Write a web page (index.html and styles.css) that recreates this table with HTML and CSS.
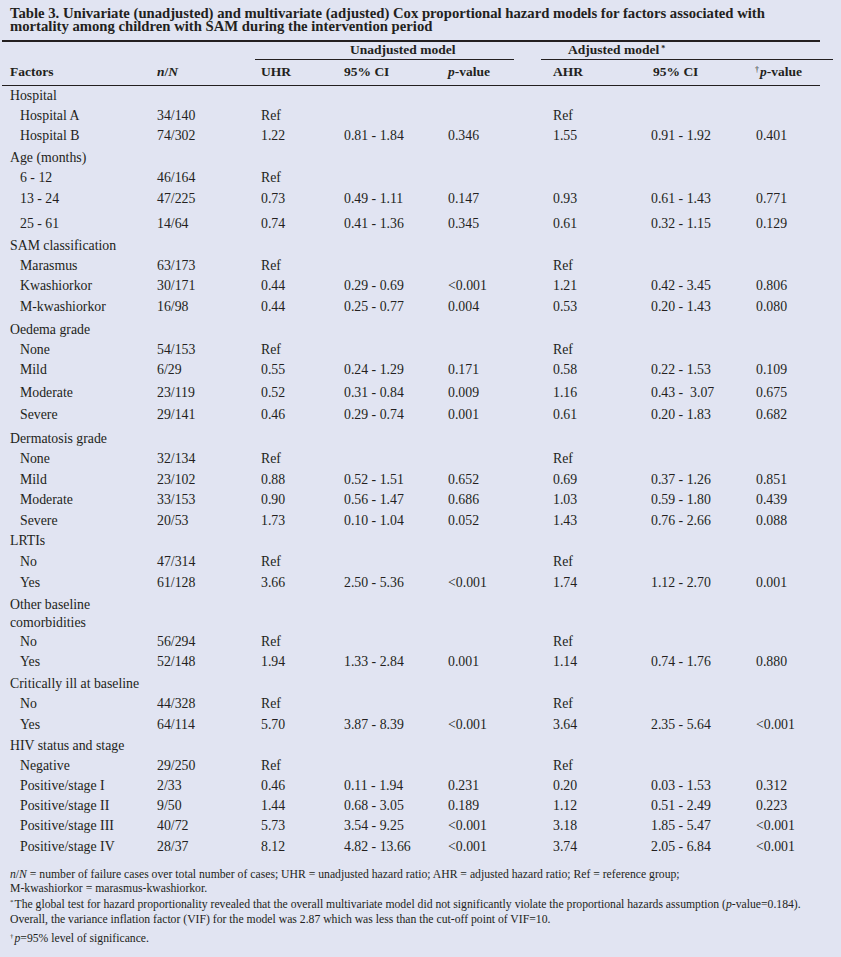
FILE: index.html
```html
<!DOCTYPE html>
<html>
<head>
<meta charset="utf-8">
<link rel="stylesheet" href="styles.css">
</head>
<body>
<div class="page">
  <h1 class="title">Table 3. Univariate (unadjusted) and multivariate (adjusted) Cox proportional hazard models for factors associated with<br>mortality among children with SAM during the intervention period</h1>
  <table class="tbl">
    <colgroup>
      <col class="c1"><col class="c2"><col class="c3"><col class="c4"><col class="c5"><col class="c6"><col class="c7"><col class="c8">
    </colgroup>
    <thead>
      <tr class="hrow1">
        <th></th><th></th>
        <th colspan="3"><div class="span-u">Unadjusted model</div></th>
        <th colspan="3"><div class="span-a">Adjusted model<sup>*</sup></div></th>
      </tr>
      <tr class="hrow2">
        <th class="lbl">Factors</th>
        <th><i>n</i>/<i>N</i></th>
        <th>UHR</th>
        <th>95% CI</th>
        <th><i>p</i>-value</th>
        <th>AHR</th>
        <th class="ci2">95% CI</th>
        <th class="pv2"><sup class="dag">†</sup><i>p</i>-value</th>
      </tr>
    </thead>
    <tbody>
      <tr class="first"><td class="grp">Hospital</td><td></td><td></td><td></td><td></td><td></td><td></td><td></td></tr>
      <tr><td class="sub">Hospital A</td><td>34/140</td><td>Ref</td><td></td><td></td><td>Ref</td><td></td><td></td></tr>
      <tr><td class="sub">Hospital B</td><td>74/302</td><td>1.22</td><td>0.81 - 1.84</td><td>0.346</td><td>1.55</td><td>0.91 - 1.92</td><td>0.401</td></tr>
      <tr class="p2"><td class="grp">Age (months)</td><td></td><td></td><td></td><td></td><td></td><td></td><td></td></tr>
      <tr><td class="sub">6 - 12</td><td>46/164</td><td>Ref</td><td></td><td></td><td></td><td></td><td></td></tr>
      <tr class="p1"><td class="sub">13 - 24</td><td>47/225</td><td>0.73</td><td>0.49 - 1.11</td><td>0.147</td><td>0.93</td><td>0.61 - 1.43</td><td>0.771</td></tr>
      <tr class="p5"><td class="sub">25 - 61</td><td>14/64</td><td>0.74</td><td>0.41 - 1.36</td><td>0.345</td><td>0.61</td><td>0.32 - 1.15</td><td>0.129</td></tr>
      <tr class="p2"><td class="grp">SAM classification</td><td></td><td></td><td></td><td></td><td></td><td></td><td></td></tr>
      <tr><td class="sub">Marasmus</td><td>63/173</td><td>Ref</td><td></td><td></td><td>Ref</td><td></td><td></td></tr>
      <tr><td class="sub">Kwashiorkor</td><td>30/171</td><td>0.44</td><td>0.29 - 0.69</td><td>&lt;0.001</td><td>1.21</td><td>0.42 - 3.45</td><td>0.806</td></tr>
      <tr class="p1"><td class="sub">M-kwashiorkor</td><td>16/98</td><td>0.44</td><td>0.25 - 0.77</td><td>0.004</td><td>0.53</td><td>0.20 - 1.43</td><td>0.080</td></tr>
      <tr class="p3"><td class="grp">Oedema grade</td><td></td><td></td><td></td><td></td><td></td><td></td><td></td></tr>
      <tr><td class="sub">None</td><td>54/153</td><td>Ref</td><td></td><td></td><td>Ref</td><td></td><td></td></tr>
      <tr><td class="sub">Mild</td><td>6/29</td><td>0.55</td><td>0.24 - 1.29</td><td>0.171</td><td>0.58</td><td>0.22 - 1.53</td><td>0.109</td></tr>
      <tr class="p3"><td class="sub">Moderate</td><td>23/119</td><td>0.52</td><td>0.31 - 0.84</td><td>0.009</td><td>1.16</td><td>0.43 -&nbsp; 3.07</td><td>0.675</td></tr>
      <tr class="p2"><td class="sub">Severe</td><td>29/141</td><td>0.46</td><td>0.29 - 0.74</td><td>0.001</td><td>0.61</td><td>0.20 - 1.83</td><td>0.682</td></tr>
      <tr class="p4"><td class="grp">Dermatosis grade</td><td></td><td></td><td></td><td></td><td></td><td></td><td></td></tr>
      <tr><td class="sub">None</td><td>32/134</td><td>Ref</td><td></td><td></td><td>Ref</td><td></td><td></td></tr>
      <tr class="p1"><td class="sub">Mild</td><td>23/102</td><td>0.88</td><td>0.52 - 1.51</td><td>0.652</td><td>0.69</td><td>0.37 - 1.26</td><td>0.851</td></tr>
      <tr><td class="sub">Moderate</td><td>33/153</td><td>0.90</td><td>0.56 - 1.47</td><td>0.686</td><td>1.03</td><td>0.59 - 1.80</td><td>0.439</td></tr>
      <tr class="p1"><td class="sub">Severe</td><td>20/53</td><td>1.73</td><td>0.10 - 1.04</td><td>0.052</td><td>1.43</td><td>0.76 - 2.66</td><td>0.088</td></tr>
      <tr><td class="grp">LRTIs</td><td></td><td></td><td></td><td></td><td></td><td></td><td></td></tr>
      <tr class="p1"><td class="sub">No</td><td>47/314</td><td>Ref</td><td></td><td></td><td>Ref</td><td></td><td></td></tr>
      <tr class="p1"><td class="sub">Yes</td><td>61/128</td><td>3.66</td><td>2.50 - 5.36</td><td>&lt;0.001</td><td>1.74</td><td>1.12 - 2.70</td><td>0.001</td></tr>
      <tr class="p3 two"><td class="grp">Other baseline<br>comorbidities</td><td></td><td></td><td></td><td></td><td></td><td></td><td></td></tr>
      <tr><td class="sub">No</td><td>56/294</td><td>Ref</td><td></td><td></td><td>Ref</td><td></td><td></td></tr>
      <tr><td class="sub">Yes</td><td>52/148</td><td>1.94</td><td>1.33 - 2.84</td><td>0.001</td><td>1.14</td><td>0.74 - 1.76</td><td>0.880</td></tr>
      <tr class="p2"><td class="grp">Critically ill at baseline</td><td></td><td></td><td></td><td></td><td></td><td></td><td></td></tr>
      <tr><td class="sub">No</td><td>44/328</td><td>Ref</td><td></td><td></td><td>Ref</td><td></td><td></td></tr>
      <tr class="p1"><td class="sub">Yes</td><td>64/114</td><td>5.70</td><td>3.87 - 8.39</td><td>&lt;0.001</td><td>3.64</td><td>2.35 - 5.64</td><td>&lt;0.001</td></tr>
      <tr class="p1"><td class="grp">HIV status and stage</td><td></td><td></td><td></td><td></td><td></td><td></td><td></td></tr>
      <tr><td class="sub">Negative</td><td>29/250</td><td>Ref</td><td></td><td></td><td>Ref</td><td></td><td></td></tr>
      <tr><td class="sub">Positive/stage I</td><td>2/33</td><td>0.46</td><td>0.11 - 1.94</td><td>0.231</td><td>0.20</td><td>0.03 - 1.53</td><td>0.312</td></tr>
      <tr><td class="sub">Positive/stage II</td><td>9/50</td><td>1.44</td><td>0.68 - 3.05</td><td>0.189</td><td>1.12</td><td>0.51 - 2.49</td><td>0.223</td></tr>
      <tr><td class="sub">Positive/stage III</td><td>40/72</td><td>5.73</td><td>3.54 - 9.25</td><td>&lt;0.001</td><td>3.18</td><td>1.85 - 5.47</td><td>&lt;0.001</td></tr>
      <tr class="p1"><td class="sub">Positive/stage IV</td><td>28/37</td><td>8.12</td><td>4.82 - 13.66</td><td>&lt;0.001</td><td>3.74</td><td>2.05 - 6.84</td><td>&lt;0.001</td></tr>
    </tbody>
  </table>
  <div class="notes">
    <p class="n1"><i>n</i>/<i>N</i> = number of failure cases over total number of cases; UHR = unadjusted hazard ratio; AHR = adjusted hazard ratio; Ref = reference group;<br>M-kwashiorkor = marasmus-kwashiorkor.</p>
    <p class="n2"><sup>*</sup>The global test for hazard proportionality revealed that the overall multivariate model did not significantly violate the proportional hazards assumption (<i>p</i>-value=0.184).<br>Overall, the variance inflation factor (VIF) for the model was 2.87 which was less than the cut-off point of VIF=10.</p>
    <p class="n3"><sup>†</sup><i>p</i>=95% level of significance.</p>
  </div>
</div>
</body>
</html>
```

FILE: styles.css
```css
html, body {
  margin: 0;
  padding: 0;
  background: #e1e4f2;
}
body {
  font-family: "Liberation Serif", "Times New Roman", serif;
  color: #231f20;
  width: 841px;
  height: 957px;
  overflow: hidden;
}
.page {
  padding: 0 0 0 2px;
}
.title {
  margin: 0;
  padding: 7px 0 0 8px;
  font-size: 14.7px;
  line-height: 13px;
  font-weight: bold;
  height: 33px;
  white-space: nowrap;
}
.tbl {
  border-collapse: collapse;
  table-layout: fixed;
  width: 818px;
  font-size: 13.8px;
  border-top: 2px solid #231f20;
}
.c1 { width: 155px; }
.c2 { width: 104px; }
.c3 { width: 83px; }
.c4 { width: 104px; }
.c5 { width: 105px; }
.c6 { width: 98px; }
.c7 { width: 105px; }
.c8 { width: 64px; }
.tbl th, .tbl td {
  padding: 0;
  text-align: left;
  vertical-align: top;
  white-space: nowrap;
}
.tbl th {
  font-weight: bold;
  font-size: 13.5px;
}
.hrow1 th {
  height: 18px;
  vertical-align: bottom;
}
.span-u {
  margin: 0 39px 0 -6px;
  padding: 0 0 2px 95px;
  line-height: 14px;
  border-bottom: 1px solid #231f20;
}
.span-a {
  margin: 0 -13px 0 -12px;
  padding: 0 0 2px 27px;
  line-height: 14px;
  border-bottom: 1px solid #231f20;
}
.span-a sup {
  font-size: 8px;
  line-height: 0;
  vertical-align: 3px;
  margin-left: 2px;
}
.hrow2 th {
  height: 25px;
  line-height: 23px;
  border-bottom: 1.5px solid #231f20;
}
.hrow2 .lbl {
  padding-left: 8px;
}
.hrow2 .ci2 {
  padding-left: 2px;
}
.dag {
  font-size: 8px;
  line-height: 0;
  vertical-align: 4px;
  margin-left: -1px;
  margin-right: 1px;
  font-weight: normal;
}
.tbl td {
  line-height: 20px;
  height: 20px;
}
.tbl td.grp {
  padding-left: 8px;
}
.tbl td.sub {
  padding-left: 18px;
}
.tbl tr.p1 td { padding-top: 1px; }
.tbl tr.p2 td { padding-top: 2px; }
.tbl tr.p3 td { padding-top: 3px; }
.tbl tr.p4 td { padding-top: 4px; }
.tbl tr.p5 td { padding-top: 5px; }
.tbl tr.two td {
  line-height: 18px;
  height: 36px;
}
.notes {
  padding: 11px 0 0 8px;
  font-size: 11.7px;
}
.notes p {
  margin: 0;
  white-space: nowrap;
}
.notes .n1 {
  line-height: 14px;
}
.notes .n2 {
  margin-top: 1px;
  line-height: 15px;
}
.notes .n3 {
  margin-top: 4px;
  line-height: 15px;
}
.notes sup {
  font-size: 7px;
  line-height: 0;
  vertical-align: 4px;
  margin-right: 1px;
}
```
